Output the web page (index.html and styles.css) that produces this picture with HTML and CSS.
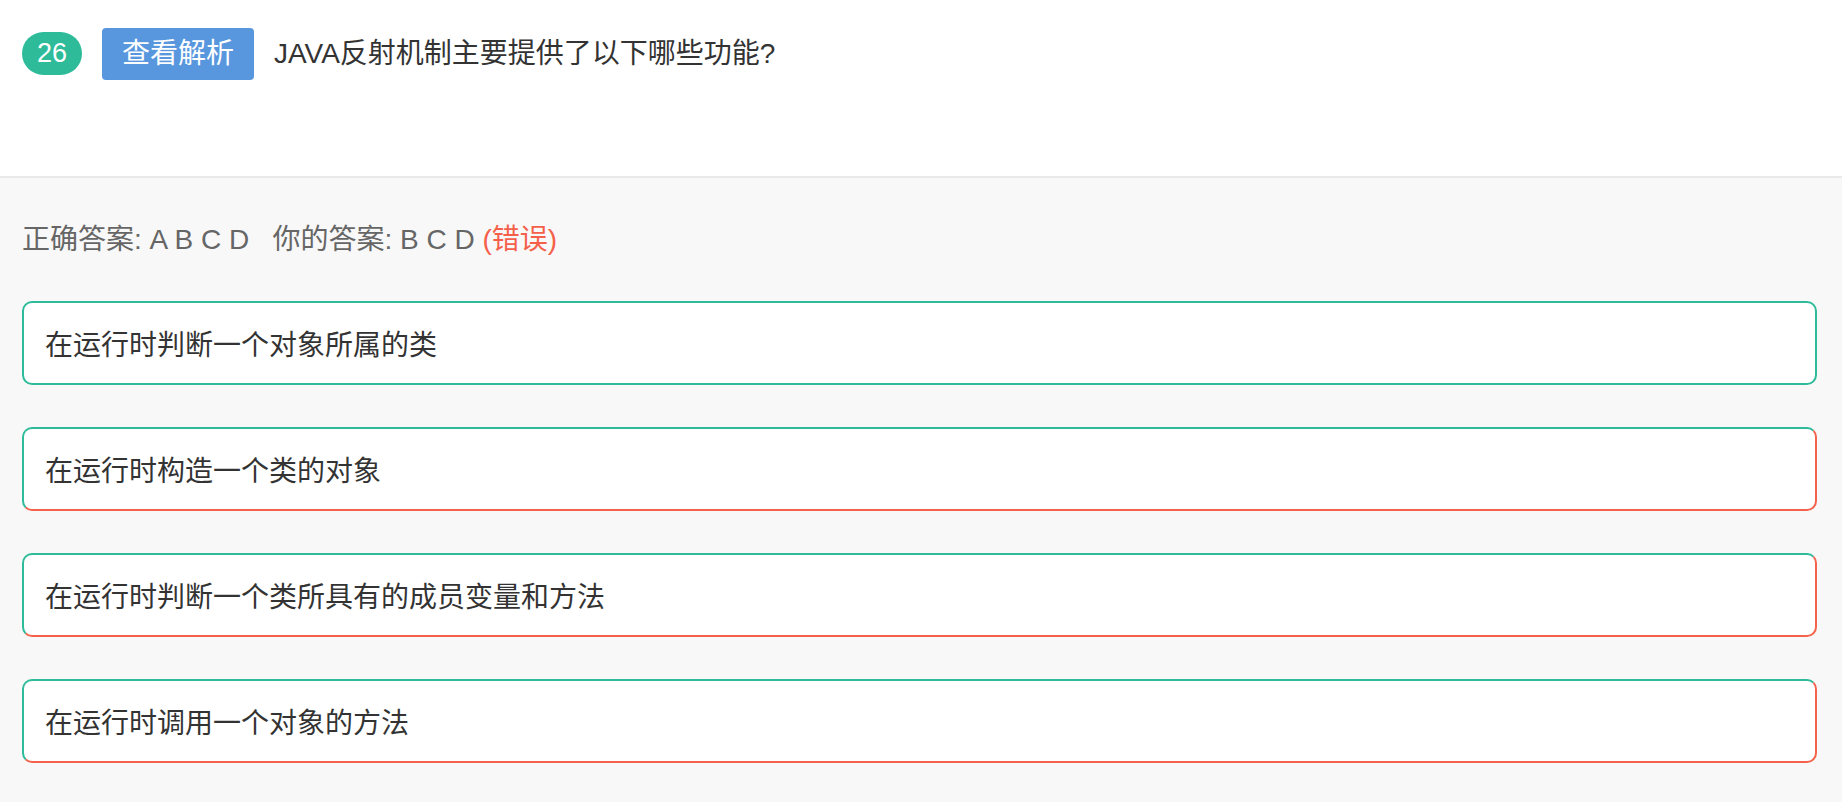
FILE: index.html
```html
<!DOCTYPE html>
<html lang="zh-CN">
<head>
<meta charset="utf-8">
<title>题目解析</title>
<link rel="stylesheet" href="styles.css">
</head>
<body>
<div class="page">
  <header class="question">
    <span class="num">26</span>
    <button class="analysis">查看解析</button>
    <span class="title">JAVA反射机制主要提供了以下哪些功能?</span>
  </header>
  <section class="answers">
    <div class="result">正确答案: A B C D&nbsp;&nbsp;&nbsp;你的答案: B C D <span class="wrong">(错误)</span></div>
    <ul class="options">
      <li class="option ok">在运行时判断一个对象所属的类</li>
      <li class="option miss">在运行时构造一个类的对象</li>
      <li class="option miss">在运行时判断一个类所具有的成员变量和方法</li>
      <li class="option miss">在运行时调用一个对象的方法</li>
    </ul>
  </section>
</div>
</body>
</html>
```
FILE: styles.css
```css
* { box-sizing: border-box; }
html, body { margin: 0; padding: 0; }
body {
  font-family: "Liberation Sans", "Noto Sans CJK SC", sans-serif;
  background: #f8f8f8;
  color: #333;
}
.page { min-height: 802px; }
.question {
  display: flex;
  height: 178px;
  align-items: flex-start;
  padding: 28px 22px 0;
  background: #fff;
  border-bottom: 2px solid #e9e9e9;
}
.num {
  display: flex;
  align-items: center;
  justify-content: center;
  width: 60px;
  height: 43px;
  margin-top: 4px;
  border-radius: 22px;
  background: #2dbb99;
  color: #fff;
  font-size: 27px;
  line-height: 1;
}
.analysis {
  margin-left: 20px;
  width: 152px;
  height: 52px;
  padding: 0;
  border: 0;
  border-radius: 4px;
  background: #5897de;
  color: #fff;
  font-family: inherit;
  font-size: 28px;
  line-height: 52px;
}
.title {
  margin-left: 20px;
  font-size: 28px;
  line-height: 52px;
  color: #333;
}
.answers {
  padding: 42px 22px 0 22px;
}
.result {
  font-size: 28px;
  line-height: 40px;
  color: #666;
}
.wrong { color: #f5604a; }
.options {
  list-style: none;
  margin: 41px 0 0;
  padding: 0;
  display: flex;
  flex-direction: column;
  gap: 42px;
}
.option {
  height: 84px;
  display: flex;
  align-items: center;
  padding-left: 21px;
  margin-right: 3px;
  background: #fff;
  border: 2px solid #2dbb99;
  border-radius: 10px;
  font-size: 28px;
  color: #333;
}
.option.miss {
  border-right-color: #f4624b;
  border-bottom-color: #f4624b;
}
```
